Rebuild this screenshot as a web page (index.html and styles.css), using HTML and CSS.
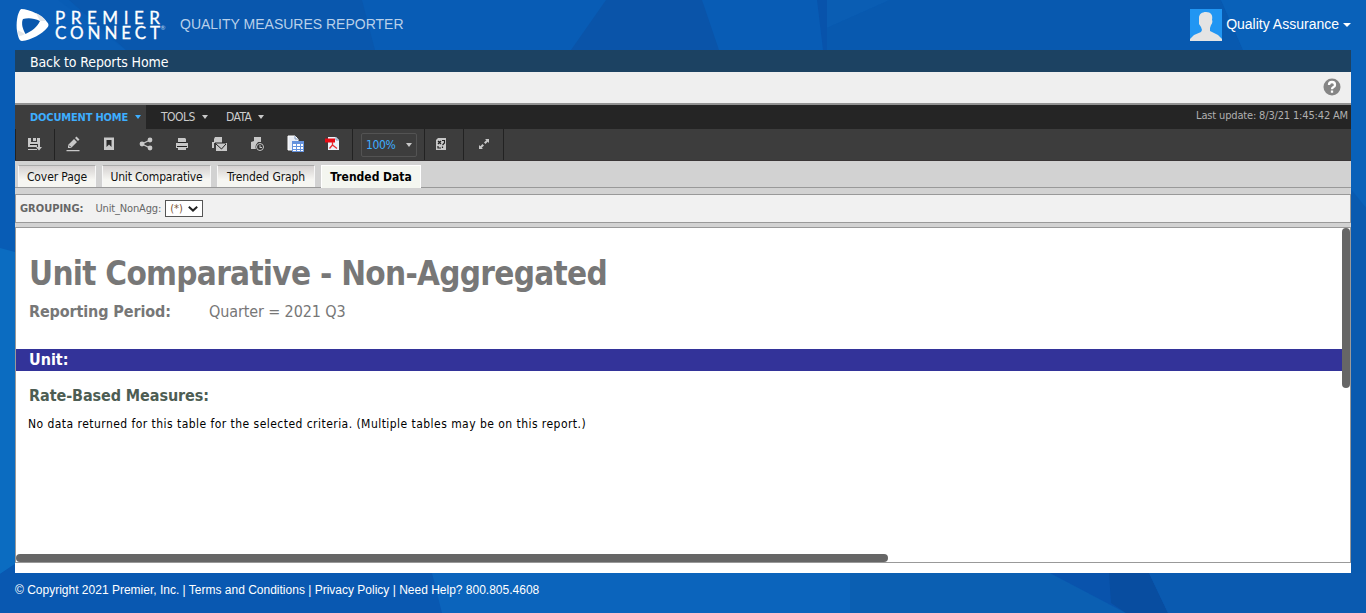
FILE: index.html
```html
<!DOCTYPE html>
<html lang="en">
<head>
<meta charset="utf-8">
<title>Quality Measures Reporter</title>
<link rel="stylesheet" href="styles.css">
</head>
<body>
<svg class="backdrop" viewBox="0 0 1366 613" preserveAspectRatio="none">
  <rect width="1366" height="613" fill="#085cb5"/>
  <path d="M0 0H58L126 50H0z" fill="#0a5eb7"/>
  <path d="M69 0H362L375 50H126z" fill="#0957ad"/>
  <path d="M606 0H702L719 50H571z" fill="#0a54a9"/>
  <path d="M817 0H827V50H823z" fill="#0853ab"/>
  <path d="M827 0H890L827 28z" fill="#0a5db3"/>
  <path d="M890 0H1221L1243 50H827V28z" fill="#0859af"/>
  <path d="M1221 0H1366V208L1243 50z" fill="#0961b9"/>
  <path d="M1351 190L1366 208V613H1351z" fill="#095aaf"/>
  <path d="M0 248L15 252V564L0 574z" fill="#0b6cc1"/>
  <path d="M0 574L15 564V573H432L442 613H0z" fill="#0958b1"/>
  <path d="M432 573H850V613H442z" fill="#0b64bc"/>
  <path d="M850 573H1050L1126 613H850z" fill="#0b5fb2"/>
  <path d="M1050 573H1149L1168 613H1126z" fill="#0953ac"/>
  <path d="M1109 573H1149L1168 613H1126L1111 603z" fill="#084da0"/>
  <path d="M1149 573H1366V613H1168z" fill="#0a5ab0"/>
</svg>
<header class="header">
  <svg class="logo" width="150" height="34" viewBox="0 0 150 34">
    <path d="M5 1C14 1 27 8 31 14C33 16 33 18 31 20C26 26 15 32 6 33C3 33 2 28 1 23C0 16 1 5 5 1z" fill="#fff"/>
    <path d="M7 11C12 9.5 18 10 24 13C21 19 16 23 9.5 26C6.500 21 5 15 7 11z" fill="#0957ad"/>
    <path d="M20 5Q27 8 30 13L24 13Q22 9 20 5M3 28Q2 26 1.500 22L9 26Q6 28 3 28" fill="#e3e7eb"/>
    <text class="logo-word" x="39" y="15.600" textLength="105">PREMIER</text>
    <text class="logo-word" x="39" y="30.600" textLength="105">CONNECT</text>
    <text class="logo-mark" x="144.500" y="22">®</text>
  </svg>
  <span class="product">QUALITY MEASURES REPORTER</span>
  <div class="user">
    <svg width="32" height="32" viewBox="0 0 32 32"><path fill="#2196f3" d="M0 0h32v32H0z"/><path fill="#e4e4e4" d="M0 32V30L4 26L11 23L12 21L11 18L9 15V9C9 5 12 3 16 3C21 3 23 6 22 11C23 12 22 15 21 16L20 19V22L28 26L32 30V32z"/></svg>
    <span class="user-name">Quality Assurance</span><i class="caret caret-white"></i>
  </div>
</header>
<main class="app">
  <nav class="home-bar"><a class="t-home">Back to Reports Home</a></nav>
  <div class="help-bar"><svg width="18" height="18" viewBox="0 0 18 18"><circle cx="9" cy="9" r="8.5" fill="#858585"/><path d="M6 7Q6 4 9 4T12 7Q12 8.5 10.2 9.3Q9 10 9 11.2M9 12.4V14.7" fill="none" stroke="#fff" stroke-width="2.3"/></svg></div>
  <div class="menu">
    <a class="menu-item active"><span class="t-dochome">DOCUMENT HOME</span><i class="caret caret-blue"></i></a>
    <a class="menu-item tools"><span class="t-menu">TOOLS</span><i class="caret"></i></a>
    <a class="menu-item data"><span class="t-menu">DATA</span><i class="caret"></i></a>
    <span class="updated">Last update: 8/3/21 1:45:42 AM</span>
  </div>
  <div class="toolbar">
    <span class="cell first"><svg class="icon" viewBox="0 0 16 16"><path d="M1 2H4V6H10V2H13V8H10V11H1z"/><path d="M6 2H9V5H6z"/><path d="M3 8H10V9H3z" fill="#222"/><path d="M1 13H10V14H1z"/><path d="M11 8H13V11H15L12 14.500L9 11H11z"/></svg></span>
    <span class="cell w36"><svg class="icon" viewBox="0 0 16 16"><path d="M3 12V9L9 3L12 6L6 12zM10 2L11.500 .5L14.500 3.500L13 5zM1.500 14H14.500V15.200H1.500z"/><path d="M4 9.500L5.800 11.300" stroke="#222"/></svg></span>
    <span class="cell w36"><svg class="icon" viewBox="0 0 16 16"><path d="M3 1.500H13V14H3z"/><path d="M5.500 4H10.500V11L8 8.500L5.500 11z" fill="#2b2b2b"/></svg></span>
    <span class="cell w37"><svg class="icon" viewBox="0 0 16 16"><path d="M12 4L4 8L12 12" fill="none" stroke="#c8c8c8" stroke-width="1.3"/><circle cx="12" cy="4" r="2.4"/><circle cx="4" cy="8" r="2.4"/><circle cx="12" cy="12" r="2.4"/></svg></span>
    <span class="cell w36"><svg class="icon" viewBox="0 0 16 16"><path d="M4 2H11L12 3V6H4zM2 7H14V12H2z"/><path d="M4 6.5H12M3 10.5H13" stroke="#222"/><path d="M4 12H12V14H4z"/></svg></span>
    <span class="cell w38"><svg class="icon" viewBox="0 0 16 16"><path d="M4 1H11V7H3V12H1V6H3V3zM5 7H16V15H5z"/><path d="M4 7H15M5 8L10.5 13L15 8" fill="none" stroke="#222"/></svg></span>
    <span class="cell w38"><svg class="icon" viewBox="0 0 16 16"><path d="M5 1H12V6H9L7 9V13H2V6L5 5z"/><circle cx="11" cy="11" r="4.5" fill="#333"/><circle cx="11" cy="11" r="3.5" fill="none" stroke="#c8c8c8"/><path d="M10.5 9H11.5V11H13V12H10.5z"/></svg></span>
    <span class="cell w40"><svg width="18" height="18" viewBox="0 0 18 18"><path d="M1 1H8L11 4V15H1z" fill="#e9edf5" stroke="#fff"/><path d="M8 1V4H11" fill="none" stroke="#829abd"/><path d="M5 6H17V17H5z" fill="#6693dd"/><path d="M6 9H9V11H6zM10 9H13V11H10zM14 9H16V11H14zM6 12H9V14H6zM10 12H13V14H10zM14 12H16V14H14zM6 15H9V16H6zM10 15H13V16H10zM14 15H16V16H14z" fill="#fff"/></svg></span>
    <span class="cell pdf"><svg width="16" height="16" viewBox="0 0 16 16"><path d="M4 1H12L15 4V14H4z" fill="#edf3fa"/><path d="M12 1V4H15" fill="none" stroke="#7f98b7"/><path d="M1 2.500H11V6.500H1z" fill="#e70b14"/><path d="M8.500 6V9L5.500 12.500M8.500 9L13 12.500" fill="none" stroke="#e62c30" stroke-width="1.3"/></svg></span>
    <span class="zoom-cell"><span class="zoom"><span class="t-zoom">100%</span><i class="caret"></i></span></span>
    <span class="cell notes"><svg class="icon" viewBox="0 0 16 16"><path d="M5 2H13V14H3V4z"/><path d="M5 5L8 8M8 5L5 8M5 10V12H8M9 4.500H11.500V7L9.500 9M9.500 10.5V12" fill="none" stroke="#222" stroke-width="1.2"/></svg></span>
    <span class="cell expand"><svg class="icon" viewBox="0 0 16 16"><path d="M9 3H13V7L11.700 5.700L9.500 8L8 6.500L10.300 4.300zM3 9L4.300 10.300L6.500 8L8 9.500L5.700 11.700L7 13H3z"/></svg></span>
  </div>
  <div class="tabs">
    <a class="tab cover"><span>Cover Page</span></a>
    <a class="tab comparative"><span>Unit Comparative</span></a>
    <a class="tab graph"><span>Trended Graph</span></a>
    <a class="tab selected"><span>Trended Data</span></a>
  </div>
  <div class="grouping">
    <span class="group-title">GROUPING:</span>
    <span class="group-name">Unit_NonAgg:</span>
    <span class="select"><span>(*)</span><svg width="10" height="6" viewBox="0 0 10 6"><path d="M.8 .8L5 4.600L9.200 .8" fill="none" stroke="#222" stroke-width="2"/></svg></span>
  </div>
  <section class="report">
    <div class="report-body">
      <h1 class="title">Unit Comparative - Non-Aggregated</h1>
      <div class="period"><b class="period-label">Reporting Period:</b><span class="period-value">Quarter = 2021 Q3</span></div>
      <h2 class="unit">Unit:</h2>
      <h3 class="measures">Rate-Based Measures:</h3>
      <p class="empty">No data returned for this table for the selected criteria. (Multiple tables may be on this report.)</p>
      <div class="scroll-x"></div>
    </div>
    <div class="scroll-y"></div>
  </section>
</main>
<footer class="footer">© Copyright 2021 Premier, Inc. | Terms and Conditions | Privacy Policy | Need Help? 800.805.4608</footer>
</body>
</html>
```
FILE: styles.css
```css
* { box-sizing: border-box; }
body {
  margin: 0;
  height: 613px;
  overflow: hidden;
  font-family: "DejaVu Sans Condensed", "DejaVu Sans", sans-serif;
  font-stretch: condensed;
  font-size: 12px;
  white-space: nowrap;
  background: #085cb5;
}
h1, h2, h3, p { margin: 0; }
.backdrop { position: absolute; left: 0; top: 0; width: 1366px; height: 613px; z-index: -1; }
.header { height: 50px; display: flex; align-items: flex-start; padding: 8px 15px 0 16px; font-family: "Liberation Sans", sans-serif; }
.logo { flex: none; overflow: visible; }
.logo-word { font: 17px Lato, sans-serif; fill: #fff; stroke: #fff; stroke-width: .3px; }
.logo-mark { font: 6px Lato, sans-serif; fill: #bcd4ee; }
.product { margin-left: 14px; line-height: 32px; font-size: 14px; color: #b8d0ea; }
.user { margin-left: auto; display: flex; align-items: center; height: 33px; color: #fff; font-size: 14px; }
.user-name { margin-left: 4px; padding-bottom: 1px; }
.caret { flex: none; border: 3.5px solid transparent; border-top: 4px solid #c8c8c8; border-bottom: 0; }
.caret-white { margin-left: 4px; border-width: 4px 4px 0; border-top-color: #fff; }
.caret-blue { border-top-color: #3daeff; }
.app { margin: 0 15px; height: 523px; background: #fff; }
.home-bar { height: 22px; background: #1c4262; padding-left: 15px; line-height: 24px; color: #fff; font-size: 14px; }
.t-home { letter-spacing: -.12px; }
.help-bar { height: 33px; background: #efefef; border-bottom: 2px solid #929292; display: flex; justify-content: flex-end; padding: 6px 10px 0 0; }
.menu { height: 24px; background: #252525; display: flex; font-size: 12px; color: #ccc; }
.menu-item { display: flex; align-items: center; gap: 7px; }
.active { width: 131px; padding-left: 15px; background: #3d3d3d; color: #3daeff; font-weight: bold; font-size: 11px; }
.t-dochome { letter-spacing: -.17px; }
.tools { padding-left: 15px; width: 65px; }
.data { padding-left: 15px; }
.t-menu { letter-spacing: -.55px; }
.updated { margin-left: auto; padding-right: 3px; line-height: 21px; font-size: 11px; color: #b0b0b0; letter-spacing: -.16px; }
.toolbar { height: 32px; background: #3d3d3d; border-bottom: 1px solid #393536; display: flex; align-items: stretch; }
.cell { flex: none; display: flex; align-items: center; justify-content: center; padding-bottom: 1px; }
.icon { width: 16px; height: 16px; fill: #c8c8c8; }
.first { width: 40px; border-right: 1px solid #222; border-left: 1px solid #222; }
.w36 { width: 36px; } .w37 { width: 37px; } .w38 { width: 38px; } .w40 { width: 40px; }
.pdf { width: 36px; padding-right: 4px; }
.zoom-cell { width: 73px; border: solid #222; border-width: 0 1px; padding: 4px 7px 0 8px; }
.zoom { display: flex; align-items: center; justify-content: space-between; width: 56px; height: 24px; border: 1px solid #535353; padding: 0 4px; color: #3daeff; border-radius: 2px; }
.notes { width: 39px; border-right: 1px solid #222; padding-right: 6px; }
.expand { width: 40px; border-right: 1px solid #222; }
.t-zoom { letter-spacing: -.4px; }
.tabs { height: 27px; background: #d2d2d2; border-bottom: 1px solid #999; display: flex; gap: 6px; padding: 4px 0 0 3px; }
.tab { height: 22px; display: flex; align-items: center; justify-content: center; color: #111; background: linear-gradient(#d5d1d1, #f6f6f2 65%); border: solid #f7f7f7; border-width: 0 1px; border-top: 1px solid #aaa; letter-spacing: -.1px; }
.cover { width: 78px; }
.comparative { width: 109px; letter-spacing: -.17px; }
.graph { width: 98px; }
.selected { width: 100px; height: 23px; background: #f4f6f0; font-weight: bold; border-color: #fff; color: #000; letter-spacing: 0; }
.grouping { height: 39px; background: #f1f1f1; border: solid #d2d2d2; border-width: 6px 0 4px; box-shadow: inset 0 1px #999, inset 0 -1px #999, inset -1px 0 #999, inset 1px 0 #999; display: flex; align-items: center; font-size: 11px; color: #666; padding: 0 5px; }
.group-title { font-weight: bold; }
.group-name { margin-left: 12px; letter-spacing: -.15px; }
.select { margin-left: 4px; width: 38px; height: 17px; border: 1px solid #555; background: #fff; display: flex; align-items: center; justify-content: space-between; padding: 0 4px; color: #7b5436; font-size: 11px; }
.report { height: 336px; border: 1px solid #999; display: flex; }
.report-body { width: 1326px; display: flex; flex-direction: column; }
.title { padding: 25px 0 0 13px; height: 72px; font-size: 33px; line-height: 42px; letter-spacing: -.72px; color: #777; }
.period { height: 49px; padding-left: 13px; display: flex; font-size: 16px; line-height: 24px; letter-spacing: -.12px; color: #777; }
.period-label { width: 180px; }
.unit { height: 22px; padding-left: 13px; background: #339; color: #fff; font-size: 16px; line-height: 22px; }
.measures { padding: 13px 0 0 13px; color: #4d5d53; font-size: 16px; line-height: 24px; height: 41px; letter-spacing: -.08px; }
.empty { padding-left: 12px; line-height: 24px; font-size: 12px; letter-spacing: .457px; color: #000; }
.scroll-x { margin-top: auto; width: 872px; height: 8px; border-radius: 4px; background: #666; }
.scroll-y { width: 8px; height: 160px; border-radius: 4px; background: #666; }
.footer { padding: 9px 0 0 15px; line-height: 16px; font-family: "Liberation Sans", sans-serif; font-size: 12px; color: #fff; }
```
